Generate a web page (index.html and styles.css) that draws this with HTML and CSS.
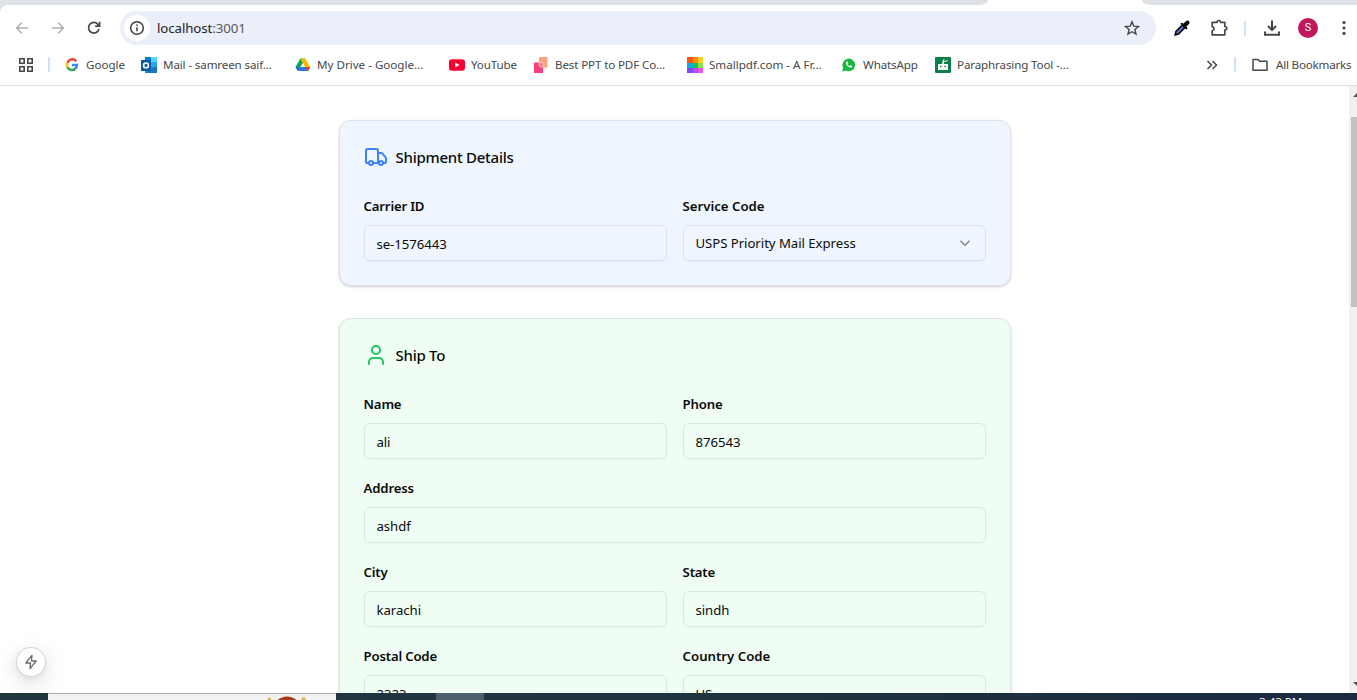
FILE: index.html
```html
<!DOCTYPE html>
<html lang="en">
<head>
<meta charset="utf-8">
<title>Shipment</title>
<link rel="stylesheet" href="styles.css">
</head>
<body>
<div class="window">
  <div class="tabs"><div class="tab-left"></div><div class="tab-right"></div></div>
  <header class="toolbar">
    <svg class="nav dim" viewBox="0 0 16 16"><path d="M14 8H2.8M8 2.5 2.5 8 8 13.5"/></svg>
    <svg class="nav dim" viewBox="0 0 16 16"><path d="M2 8h11.2M8 2.5 13.5 8 8 13.5"/></svg>
    <svg class="nav reload" viewBox="0 0 16 16"><path d="M13 9A5.3 5.3 0 1 1 11.8 4.2L13.3 5.8M13.6 1.8v4.4H9.2"/></svg>
    <div class="omnibox">
      <span class="info"><svg viewBox="0 0 16 16"><circle cx="8" cy="8" r="6.3"/><path d="M8 7.2v4M8 4.5v1.5"/></svg></span>
      <span class="url">localhost<span>:3001</span></span>
      <svg class="star" viewBox="0 0 16 16"><path d="m8 1.8 1.8 4.3 4.7.4-3.6 3 1.1 4.6L8 11.7l-4 2.4 1.1-4.6-3.6-3 4.7-.4z"/></svg>
    </div>
    <div class="tools">
      <svg class="dropper" viewBox="0 0 18 18"><path d="M2.200 15.800 3 12.500 9.500 6l2.500 2.500L5.500 15z" fill="#6a6fca" stroke="#080812" stroke-width="1.600"/><path d="m8.800 4.800 4.500 4.500" stroke="#080812" stroke-width="2.200" stroke-linecap="round"/><path d="m11.500 6.500 3-3" stroke="#080812" stroke-width="4" stroke-linecap="round"/></svg>
      <svg class="puzzle" viewBox="0 0 18 18"><path d="M2.200 3.300h4.800c0-2.400 3.600-2.400 3.600 0h4.200V7.500c2.600 0 2.600 3.600 0 3.600v4.700H2.200v-4.300c2.600-.3 2.600-3.400 0-3.700z"/></svg>
      <i class="sep"></i>
      <svg class="download" viewBox="0 0 18 18"><path d="M9 1.5v9M5 7l4 4 4-4M2 12.5v3.2h14v-3.2"/></svg>
      <span class="avatar">S</span>
      <svg class="dots" viewBox="0 0 4 16"><circle cx="2" cy="2.6" r="1.6"/><circle cx="2" cy="8" r="1.6"/><circle cx="2" cy="13.4" r="1.6"/></svg>
    </div>
  </header>
  <nav class="bookmarks">
    <svg class="apps" viewBox="0 0 16 16"><path d="M1.8 1.8h4.4v4.4H1.8zM9.8 1.8h4.4v4.4H9.8zM1.8 9.8h4.4v4.4H1.8zM9.8 9.8h4.4v4.4H9.8z"/></svg>
    <i class="sep"></i>
    <div class="links">
      <a><svg viewBox="0 0 16 16" fill="none" stroke-width="2.5"><path d="M12.2 4.2A5 5 0 0 0 3.5 5.8" stroke="#ea4335"/><path d="M3.5 5.7a5.1 5.1 0 0 0 0 4.6" stroke="#fbbc05"/><path d="M3.5 10.2a5 5 0 0 0 7.8 1.6" stroke="#34a853"/><path d="M8 8.1h4.9a5 5 0 0 1-1.7 3.8" stroke="#4285f4"/></svg><span>Google</span></a>
      <a><svg viewBox="0 0 16 16"><path d="M4 0h12v16H4z" fill="#1490df"/><path d="M10 0h6v5h-6z" fill="#50d9ff"/><path d="M4 0h6v5H4z" fill="#0f78c9"/><path d="M10 5h6v5h-6z" fill="#28a8ea"/><path d="m4 16 12-7v7z" fill="#1c75bc"/><path d="M0 3h10v11H0z" fill="#075ca8"/><circle cx="5" cy="8.4" r="2.4" fill="none" stroke="#fff" stroke-width="1.6"/></svg><span class="tight">Mail - samreen saif...</span></a>
      <a class="drive"><svg viewBox="0 0 16 16"><path d="M5.3 1.5h5L7.8 6 3 14 .5 10z" fill="#0da960"/><path d="M5.3 1.5h5l5 8.7h-5z" fill="#ffba00"/><path d="m3 14 2.4-4h9.8L13 14z" fill="#3777e3"/><path d="m.5 10 2.5 4 2.4-4z" fill="#2463d0"/><path d="M10.2 10h5L13 14z" fill="#ea4335"/></svg><span>My Drive - Google...</span></a>
      <a><svg viewBox="0 0 16 16"><rect y="2.2" width="16" height="11.6" rx="3" fill="#f8002f"/><path d="m6.3 5.6 4.2 2.4-4.2 2.4z" fill="#fff"/></svg><span class="tight">YouTube</span></a>
      <a class="near"><svg viewBox="0 0 16 16"><path d="M5 0h8.5v10.5H5z" fill="#f7a57c"/><path d="M0 5.5h5L9 9v7H0z" fill="#f6427c"/><path d="M5 5.5h4V10H7a2 2 0 0 1-2-2z" fill="#f47a7e" stroke="#ffd8d4" stroke-width=".7"/></svg><span class="tight">Best PPT to PDF Co...</span></a>
      <a><svg viewBox="0 0 16 16" shape-rendering="crispEdges"><path d="M0 0h6v6H0z" fill="#f35a0c"/><path d="M6 0h5v6H6z" fill="#fb8c0b"/><path d="M11 0h5v6h-5z" fill="#ffd01e"/><path d="M0 6h6v5H0z" fill="#12a9e8"/><path d="M6 6h5v5H6z" fill="#16c649"/><path d="M11 6h5v5h-5z" fill="#8ee051"/><path d="M0 11h6v5H0z" fill="#7a4bf0"/><path d="M6 11h5v5H6z" fill="#b94bf0"/><path d="M11 11h5v5h-5z" fill="#ec50f0"/></svg><span>Smallpdf.com - A Fr...</span></a>
      <a class="whatsapp"><svg viewBox="0 0 16 16"><path d="m1.2 14.5 1-3.6A6.3 6.3 0 1 1 5 13.600z" fill="#17b83d"/><path d="M5.7 4.6c-2.6 2 2.3 7 5 6l.6-1.5-1.7-1-.9.9C7.5 8.600 6.900 7.900 6.500 7l.8-.9-.7-1.600z" fill="#fff"/></svg><span class="tight">WhatsApp</span></a>
      <a><svg viewBox="0 0 16 16"><rect width="16" height="16" rx="1" fill="#0b8048"/><path d="M3 7h4.300V4.800L8.300 2.500h1.400L8.900 4.800V7H13v6H3z" fill="#fff"/><path d="M5 8.800h1.500v1.500H5zM9.500 8.800H11v1.500H9.500z" fill="#0b8048"/><path d="m9.300 4.800 3.200-1.300" stroke="#fff"/></svg><span class="tight">Paraphrasing Tool -...</span></a>
    </div>
    <svg class="more" viewBox="0 0 12 12"><path d="m1.500 2 4 4-4 4M6.500 2l4 4-4 4"/></svg>
    <i class="sep"></i>
    <svg class="folder" viewBox="0 0 16 14"><path d="M1 12.200V1.500h5l1.600 1.800H15v8.900z"/></svg>
    <span class="all">All Bookmarks</span>
  </nav>
  <div class="viewport">
    <main class="page">
      <section class="card blue">
        <h2><svg class="icon" viewBox="0 0 24 24"><path d="M14 18V6a2 2 0 0 0-2-2H4a2 2 0 0 0-2 2v11a1 1 0 0 0 1 1h2M15 18H9M19 18h2a1 1 0 0 0 1-1v-3.650a1 1 0 0 0-.220-.624l-3.480-4.350A1 1 0 0 0 17.520 8H14"/><circle cx="17" cy="18" r="2"/><circle cx="7" cy="18" r="2"/></svg><span>Shipment Details</span></h2>
        <div class="fields">
          <div><label>Carrier ID</label><div class="input">se-1576443</div></div>
          <div><label class="loose">Service Code</label><div class="input select"><span>USPS Priority Mail Express</span><svg class="chev" viewBox="0 0 16 16"><path d="m3.500 5.800 4.500 4.500 4.500-4.500"/></svg></div></div>
        </div>
      </section>
      <section class="card green">
        <h2><svg class="icon" viewBox="0 0 24 24"><path d="M19 21v-2a4 4 0 0 0-4-4H9a4 4 0 0 0-4 4v2"/><circle cx="12" cy="7" r="4"/></svg><span>Ship To</span></h2>
        <div class="fields">
          <div><label>Name</label><div class="input">ali</div></div>
          <div><label>Phone</label><div class="input">876543</div></div>
          <div class="wide"><label>Address</label><div class="input">ashdf</div></div>
          <div><label>City</label><div class="input">karachi</div></div>
          <div><label>State</label><div class="input">sindh</div></div>
          <div><label>Postal Code</label><div class="input">2323</div></div>
          <div><label class="loose">Country Code</label><div class="input">US</div></div>
        </div>
      </section>
    </main>
    <div class="scroll"><i class="up"></i><i class="thumb"></i><i class="down"></i></div>
    <div class="badge"><svg viewBox="0 0 16 16"><path d="M9 1.300 2.800 9h4.700L7 14.700 13.200 7H8.500z"/></svg></div>
  </div>
  <footer class="taskbar">
    <div class="search"><svg viewBox="0 0 50 7"><circle cx="25" cy="17" r="14.500" fill="#a93a16"/><path d="m5 7 1-3 2-1 2 4zM39 5l2-2 3 1-1 3h-3z" fill="#dfbd4d"/></svg></div>
    <div class="active"></div>
    <div class="clock">3:43 PM</div>
  </footer>
</div>
</body>
</html>
```
FILE: styles.css
```css
* { box-sizing: border-box; }
body { margin: 0; background: #fff; font-family: "Noto Sans", "Open Sans", sans-serif; overflow: hidden; }
svg { display: block; flex: none; }
.window { width: 1357px; height: 700px; display: flex; flex-direction: column; overflow: hidden; }
.tabs { height: 5px; display: flex; justify-content: space-between; background: #fff; flex: none; }
.tab-left { width: 988px; background: #dee1e6; border-bottom-right-radius: 8px 5px; }
.tab-right { width: 215px; background: #dee1e6; border-bottom-left-radius: 8px 5px; }
.toolbar { height: 46px; flex: none; display: flex; align-items: center; padding-left: 14px; background: radial-gradient(circle at 8px 8px, #fff 7.5px, #dee1e6 8.5px) 0 0 / 8px 8px no-repeat, #fff; }
.nav { width: 16px; height: 16px; margin-right: 20px; fill: none; stroke: #45474a; stroke-width: 1.6; }
.nav.dim { stroke: #aaacae; stroke-width: 1.4; }
.nav.reload { margin-right: 18px; stroke-width: 1.7; }
.omnibox { width: 1036px; height: 34px; border-radius: 17px; background: #ebeff9; display: flex; align-items: center; padding: 0 16px 0 4px; }
.info { width: 26px; height: 26px; border-radius: 50%; background: #fff; display: grid; place-items: center; }
.info svg { width: 16px; height: 16px; fill: none; stroke: #3c3e41; stroke-width: 1.5; }
.url { margin-left: 7px; font-size: 13.3px; line-height: 18px; color: #202124; letter-spacing: -.1px; }
.url span { color: #55585c; }
.star { width: 16px; height: 16px; margin-left: auto; fill: none; stroke: #45474a; stroke-width: 1.4; }
.tools { display: flex; align-items: center; flex: 1; }
.dropper { width: 18px; height: 18px; margin-left: 17px; fill: none; }
.puzzle { width: 18px; height: 18px; margin-left: 19px; fill: none; stroke: #45474a; stroke-width: 1.7; stroke-linejoin: round; }
.sep { width: 2px; height: 15px; background: #d3e1f8; flex: none; }
.tools .sep { margin-left: 16px; }
.download { width: 18px; height: 18px; margin-left: 17px; fill: none; stroke: #45474a; stroke-width: 2; }
.avatar { width: 20px; height: 20px; margin-left: 17px; border-radius: 50%; background: #c2185b; color: #fff; font: 11px/20px Roboto, sans-serif; text-align: center; }
.dots { width: 4px; height: 16px; margin-left: 24px; fill: #45474a; }
.bookmarks { height: 35px; flex: none; display: flex; align-items: center; padding: 0 0 7px 18px; border-bottom: 1px solid #dfe0e2; font-size: 11.6px; line-height: 16px; color: #45474a; white-space: nowrap; }
.apps { width: 16px; height: 16px; margin-right: 14px; fill: none; stroke: #45474a; stroke-width: 1.6; }
.links { width: 1142px; margin-left: 14px; display: grid; grid-template-columns: 77px 155px 153px 85px 153px 155px 93px 1fr; }
.links a { display: flex; align-items: center; gap: 6px; }
.links .drive, .links .whatsapp { margin-left: -1px; }
.links .near { gap: 5px; }
.links svg { width: 16px; height: 16px; }
.tight { letter-spacing: -.13px; }
.all { letter-spacing: -.2px; }
.more { width: 12px; height: 12px; margin-right: 16px; fill: none; stroke: #45474a; stroke-width: 1.5; }
.folder { width: 16px; height: 14px; margin: 0 8px 0 16px; fill: none; stroke: #45474a; stroke-width: 1.5; stroke-linejoin: round; }
.viewport { flex: 1; min-height: 0; position: relative; display: flex; overflow: hidden; }
.page { width: 1349px; padding: 34px 0 0 339px; }
.card { width: 672px; border: 1px solid #e0e4e9; border-radius: 12px; padding: 24px; box-shadow: 0 1px 3px rgba(0,0,0,.12), 0 1px 2px rgba(0,0,0,.08); margin-bottom: 32px; color: #0a0a0a; }
.blue { background: #eff6ff; }
.green { background: #f0fdf4; border-color: #dfe5e3; }
.card h2 { margin: 0 0 27px; height: 24px; display: flex; align-items: center; gap: 7.5px; font-size: 15px; line-height: 24px; font-weight: 500; letter-spacing: -.26px; }
.icon { width: 24px; height: 24px; fill: none; stroke: #3b82f6; stroke-width: 2; stroke-linecap: round; stroke-linejoin: round; }
.green .icon { stroke: #22c55e; }
.fields { display: grid; grid-template-columns: 303px 303px; column-gap: 16px; row-gap: 19px; }
.wide { grid-column: 1 / 3; }
.fields label { display: block; height: 20px; margin: 0 0 9px -.4px; font-size: 13.2px; line-height: 20px; font-weight: 600; letter-spacing: -.2px; }
.fields .loose { letter-spacing: 0; }
.input { height: 36px; border: 1px solid #dce3eb; border-radius: 6px; padding: 1px 12px 0 11.4px; font-size: 13.2px; line-height: 35px; letter-spacing: -.04px; box-shadow: 0 1px 2px rgba(0,0,0,.04); }
.green .input { border-color: #dce7e1; }
.select { display: flex; align-items: center; justify-content: space-between; padding-top: 0; }
.chev { width: 16px; height: 16px; fill: none; stroke: #7e858e; stroke-width: 1.4; }
.scroll { width: 8px; background: #f1f1f1; display: flex; flex-direction: column; align-items: flex-end; overflow: hidden; }
.up, .down { width: 4px; height: 4px; background: #505050; flex: none; }
.up { margin-top: 7px; clip-path: polygon(100% 0, 100% 100%, 0 100%); }
.thumb { width: 6px; height: 190px; margin-top: 20px; background: #c1c1c1; }
.down { margin-top: auto; margin-bottom: 7px; clip-path: polygon(0 0, 100% 0, 100% 100%); }
.badge { position: absolute; left: 17px; bottom: 17px; width: 28px; height: 28px; border-radius: 50%; background: #fff; display: grid; place-items: center; box-shadow: 0 0 0 1px #d5d5d5, 0 8px 28px rgba(0,0,0,.14), 0 3px 8px rgba(0,0,0,.1); }
.badge svg { width: 16px; height: 18px; fill: none; stroke: #686868; stroke-width: 1.3; stroke-linejoin: round; }
.taskbar { height: 7px; flex: none; display: flex; padding-left: 48px; overflow: hidden; background: linear-gradient(90deg, #203740, #20363f 45%, #1b2941); }
.search { width: 288px; height: 7px; background: #f2f2f2; border-top: 1px solid #aaa; overflow: hidden; }
.search svg { width: 50px; height: 7px; margin-left: 214px; }
.active { width: 48px; margin-left: 100px; background: #4f5f69; }
.clock { margin-left: 775px; padding-top: 1px; color: #fff; font-size: 11.5px; line-height: 16px; white-space: nowrap; }
```
